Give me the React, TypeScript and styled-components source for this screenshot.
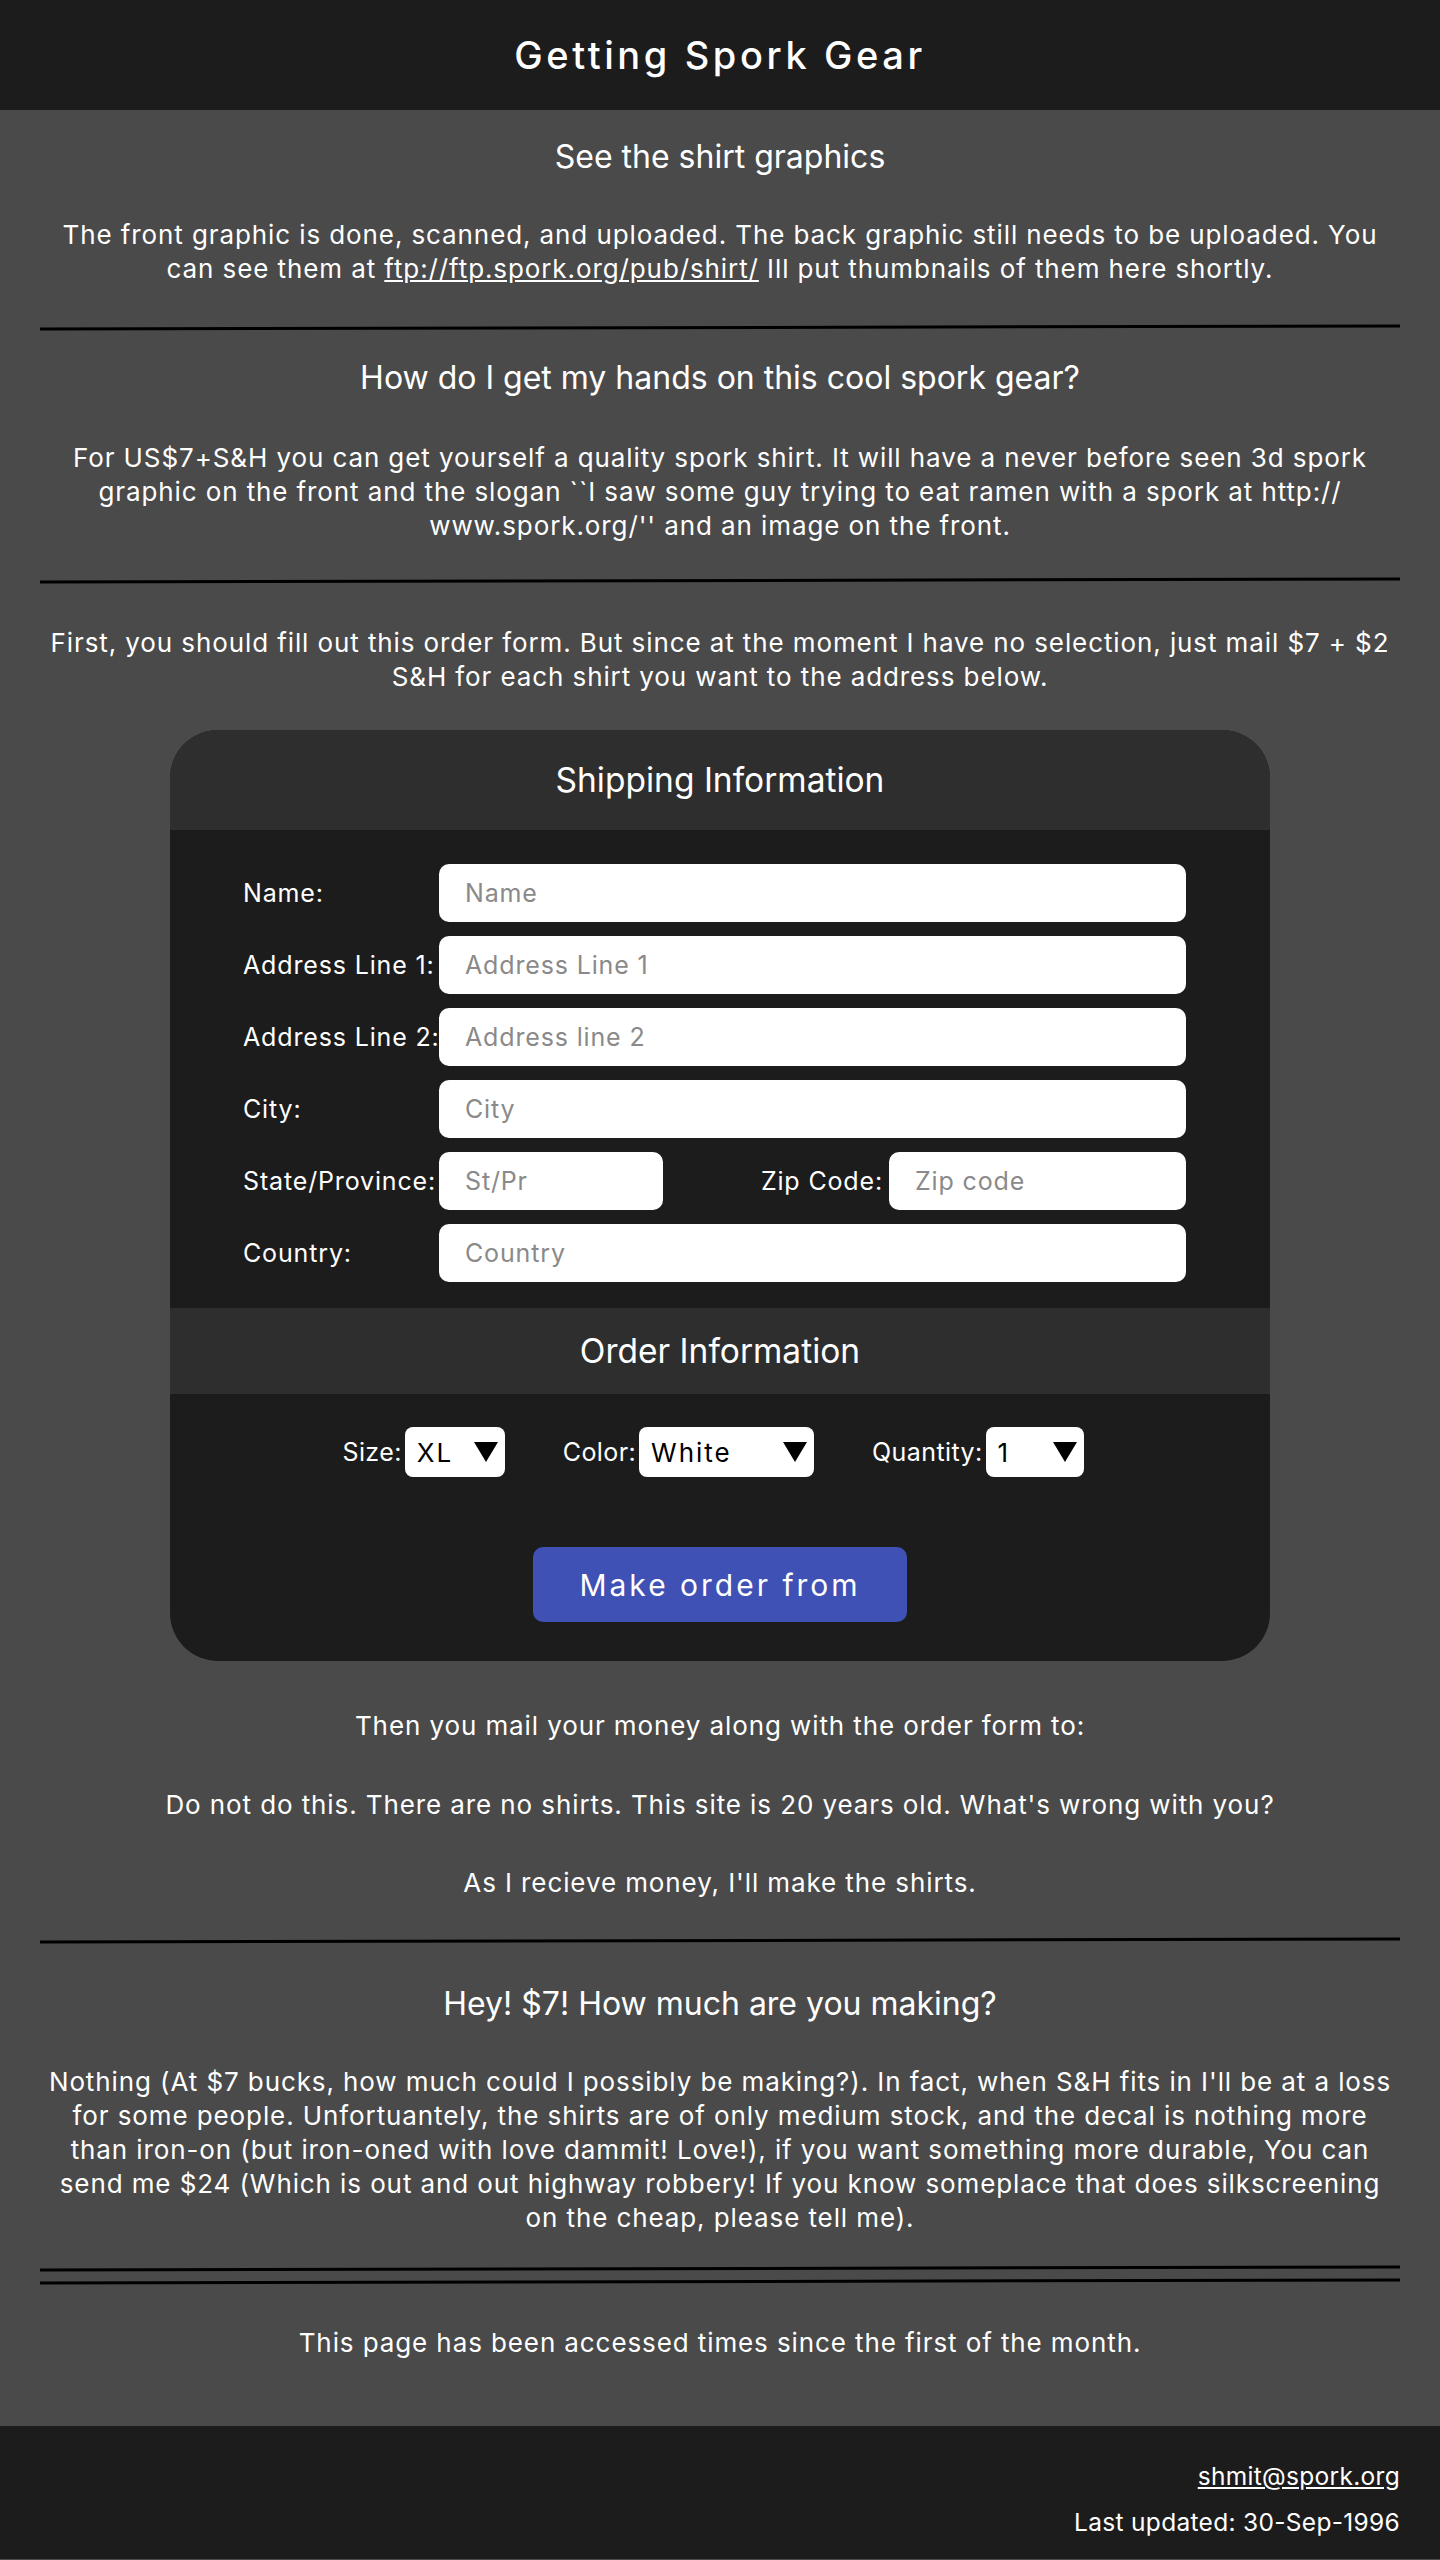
import React from "react";
import styled, { createGlobalStyle } from "styled-components";

const GlobalStyle = createGlobalStyle`
  html, body { margin: 0; padding: 0; background: #4a4a4a; }
  body { font-family: Inter, "Noto Sans", sans-serif; color: #ffffff; }
  * { box-sizing: border-box; }
`;

const Header = styled.header`
  background: #1c1c1c;
  height: 110px;
  display: flex;
  align-items: center;
  justify-content: center;
`;

const Title = styled.h1`
  margin: 0;
  font-size: 38px;
  font-weight: 500;
  letter-spacing: 3.6px;
  line-height: 1;
  color: #ffffff;
`;

const Main = styled.main`
  display: flex;
  flex-direction: column;
  padding: 0 40px;
`;

const Heading = styled.h2<{ $mt: number }>`
  margin: ${(p) => p.$mt}px 0 0;
  font-size: 32px;
  font-weight: 400;
  line-height: 38px;
  text-align: center;
`;

const Para = styled.p<{ $mt: number }>`
  margin: ${(p) => p.$mt}px 0 0;
  font-size: 26px;
  letter-spacing: 0.9px;
  line-height: 34px;
  text-align: center;
`;

const Link = styled.a`
  color: #ffffff;
  text-decoration: underline;
`;

const Rule = styled.hr<{ $mt: number }>`
  margin: ${(p) => p.$mt}px 0 0;
  border: 0;
  height: 3px;
  background: #000000;
  transform: rotate(-0.13deg);
`;

const Card = styled.form`
  margin: 36px auto 0;
  width: 1100px;
  border-radius: 48px;
  overflow: hidden;
  background: #1c1c1c;
  display: flex;
  flex-direction: column;
`;

const Band = styled.div<{ $h: number }>`
  height: ${(p) => p.$h}px;
  background: #2e2e2e;
  display: flex;
  align-items: center;
  justify-content: center;
  font-size: 33.5px;
  line-height: 40px;
`;

const Fields = styled.div`
  padding: 34px 84px 26px 73px;
  display: flex;
  flex-direction: column;
  gap: 14px;
`;

const Row = styled.div`
  display: grid;
  grid-template-columns: 196px 1fr;
  align-items: center;
  height: 58px;
`;

const Label = styled.label<{ $tight?: boolean }>`
  font-size: 25px;
  letter-spacing: ${(p) => (p.$tight ? "0.4px" : "0.85px")};
  line-height: 30px;
  color: #ffffff;
  white-space: nowrap;
`;

const Input = styled.input<{ $w?: number }>`
  width: ${(p) => (p.$w ? `${p.$w}px` : "100%")};
  height: 58px;
  border: 0;
  border-radius: 10px;
  background: #ffffff;
  padding: 0 26px;
  font-family: Inter, "Noto Sans", sans-serif;
  font-size: 25px;
  letter-spacing: 0.85px;
  color: #111;
  outline: none;
  &::placeholder { color: #8a8a8a; }
`;

const SplitRow = styled.div`
  display: flex;
  align-items: center;
  justify-content: space-between;
`;

const Pair = styled.div<{ $gap: number }>`
  display: flex;
  align-items: center;
  gap: ${(p) => p.$gap}px;
`;

const OrderArea = styled.div`
  padding: 33px 0 39px;
  display: flex;
  flex-direction: column;
  align-items: center;
  gap: 70px;
`;

const SelectRow = styled.div`
  display: flex;
  align-items: center;
  gap: 58px;
  margin-right: 14px;
`;

const SelectWrap = styled.div<{ $w: number }>`
  position: relative;
  width: ${(p) => p.$w}px;
  height: 50px;
`;

const Select = styled.select`
  appearance: none;
  -webkit-appearance: none;
  width: 100%;
  height: 100%;
  border: 0;
  border-radius: 8px;
  background: #ffffff;
  padding: 0 0 0 12px;
  font-family: Inter, "Noto Sans", sans-serif;
  font-size: 26px;
  letter-spacing: 2px;
  color: #000;
  outline: none;
`;

const Arrow = styled.svg`
  position: absolute;
  right: 7px;
  top: 15px;
  pointer-events: none;
`;

const Button = styled.button`
  width: 374px;
  height: 75px;
  border: 0;
  border-radius: 10px;
  background: #3f51b5;
  color: #ffffff;
  font-family: Inter, "Noto Sans", sans-serif;
  font-size: 30px;
  letter-spacing: 3px;
  cursor: pointer;
`;

const Footer = styled.footer`
  margin-top: 66px;
  background: #1c1c1c;
  padding: 33px 40px 20px;
  display: flex;
  flex-direction: column;
  align-items: flex-end;
  gap: 12px;
  font-size: 24.5px;
  letter-spacing: 0.3px;
  line-height: 34px;
`;

const FooterText = styled.span`
  color: #ffffff;
`;

const Dropdown: React.FC<{ w: number; options: string[] }> = ({ w, options }) => (
  <SelectWrap $w={w}>
    <Select defaultValue={options[0]}>
      {options.map((o) => (
        <option key={o}>{o}</option>
      ))}
    </Select>
    <Arrow width="24" height="20" viewBox="0 0 24 20">
      <polygon points="0,0 24,0 12,20" fill="#000" />
    </Arrow>
  </SelectWrap>
);

export default function App() {
  return (
    <>
      <GlobalStyle />
      <Header>
        <Title>Getting Spork Gear</Title>
      </Header>
      <Main>
        <Heading $mt={28}>See the shirt graphics</Heading>
        <Para $mt={42}>
          The front graphic is done, scanned, and uploaded. The back graphic still needs to be uploaded. You can
          see them at <Link href="#">ftp://ftp.spork.org/pub/shirt/</Link> Ill put thumbnails of them here shortly.
        </Para>
        <Rule $mt={40} />
        <Heading $mt={30}>How do I get my hands on this cool spork gear?</Heading>
        <Para $mt={44}>
          For US$7+S&amp;H you can get yourself a quality spork shirt. It will have a never before seen 3d spork
          graphic on the front and the slogan ``I saw some guy trying to eat ramen with a spork at http://<wbr />www.spork.org/'' and an image on the front.
        </Para>
        <Rule $mt={36} />
        <Para $mt={44}>
          First, you should fill out this order form. But since at the moment I have no selection, just mail $7 + $2
          S&amp;H for each shirt you want to the address below.
        </Para>
        <Card onSubmit={(e) => e.preventDefault()}>
          <Band $h={100}>Shipping Information</Band>
          <Fields>
            <Row>
              <Label>Name:</Label>
              <Input placeholder="Name" />
            </Row>
            <Row>
              <Label>Address Line 1:</Label>
              <Input placeholder="Address Line 1" />
            </Row>
            <Row>
              <Label>Address Line 2:</Label>
              <Input placeholder="Address line 2" />
            </Row>
            <Row>
              <Label>City:</Label>
              <Input placeholder="City" />
            </Row>
            <Row>
              <Label>State/Province:</Label>
              <SplitRow>
                <Input $w={224} placeholder="St/Pr" />
                <Pair $gap={6}>
                  <Label>Zip Code:</Label>
                  <Input $w={297} placeholder="Zip code" />
                </Pair>
              </SplitRow>
            </Row>
            <Row>
              <Label>Country:</Label>
              <Input placeholder="Country" />
            </Row>
          </Fields>
          <Band $h={86}>Order Information</Band>
          <OrderArea>
            <SelectRow>
              <Pair $gap={3}>
                <Label $tight>Size:</Label>
                <Dropdown w={100} options={["XL", "L", "M", "S"]} />
              </Pair>
              <Pair $gap={3}>
                <Label $tight>Color:</Label>
                <Dropdown w={175} options={["White", "Black"]} />
              </Pair>
              <Pair $gap={3}>
                <Label $tight>Quantity:</Label>
                <Dropdown w={98} options={["1", "2", "3"]} />
              </Pair>
            </SelectRow>
            <Button type="submit">Make order from</Button>
          </OrderArea>
        </Card>
        <Para $mt={48}>Then you mail your money along with the order form to:</Para>
        <Para $mt={45}>Do not do this. There are no shirts. This site is 20 years old. What's wrong with you?</Para>
        <Para $mt={44}>As I recieve money, I'll make the shirts.</Para>
        <Rule $mt={39} />
        <Heading $mt={43}>Hey! $7! How much are you making?</Heading>
        <Para $mt={42}>
          Nothing (At $7 bucks, how much could I possibly be making?). In fact, when S&amp;H fits in I'll be at a loss
          for some people. Unfortuantely, the shirts are of only medium stock, and the decal is nothing more than
          iron-on (but iron-oned with love dammit! Love!), if you want something more durable, You can send me $24
          (Which is out and out highway robbery! If you know someplace that does silkscreening on the cheap, please tell me).
        </Para>
        <Rule $mt={32} />
        <Rule $mt={10} />
        <Para $mt={43}>This page has been accessed times since the first of the month.</Para>
      </Main>
      <Footer>
        <Link href="#">shmit@spork.org</Link>
        <FooterText>Last updated: 30-Sep-1996</FooterText>
      </Footer>
    </>
  );
}
